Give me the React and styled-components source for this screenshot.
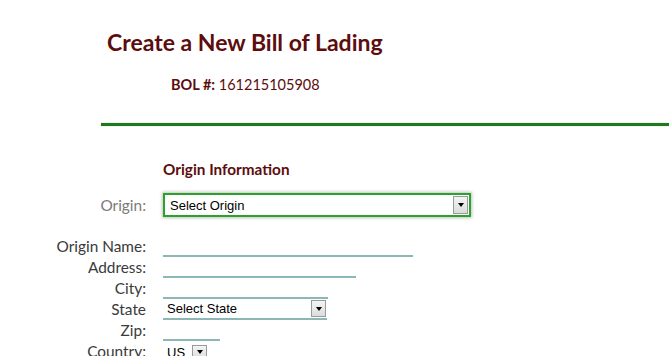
import React from "react";
import styled, { createGlobalStyle } from "styled-components";

const GlobalStyle = createGlobalStyle`
  html, body {
    margin: 0;
    padding: 0;
    background: #fff;
  }
  body {
    font-family: Lato, "Open Sans", sans-serif;
    color: #333;
  }
`;

const maroon = "#5c0d0d";
const rule = "#8db7b7";

const Page = styled.div`
  width: 669px;
  height: 356px;
  overflow: hidden;
`;

const Header = styled.div`
  padding: 28px 0 0 107px;
`;

const Title = styled.h1`
  margin: 0;
  font-size: 23px;
  font-weight: 700;
  color: ${maroon};
  line-height: 28px;
`;

const BolLine = styled.div`
  margin: 20px 0 0 64px;
  font-size: 14.5px;
  line-height: 18px;
  color: ${maroon};
  b {
    font-weight: 700;
  }
`;

const Divider = styled.div`
  margin: 29px 0 0 101px;
  height: 3px;
  background: #1c7a1c;
  box-shadow: 0 0 1px #5fa85f;
`;

const Form = styled.div`
  display: grid;
  grid-template-columns: 146px auto;
  column-gap: 17px;
  margin-top: 34px;
`;

const Section = styled.div`
  grid-column: 2;
  font-size: 15.3px;
  font-weight: 700;
  color: ${maroon};
  line-height: 18px;
  margin-bottom: 15px;
`;

const Label = styled.div`
  grid-column: 1;
  text-align: right;
  font-size: 15.4px;
  color: ${(p) => (p.$muted ? "#7a7a7a" : "#3a3a3a")};
  line-height: ${(p) => p.$h || 21}px;
  height: ${(p) => p.$h || 21}px;
  margin-bottom: ${(p) => p.$mb || 0}px;
  white-space: nowrap;
`;

const Field = styled.div`
  grid-column: 2;
  height: ${(p) => p.$h || 21}px;
  display: flex;
  align-items: flex-end;
  margin-bottom: ${(p) => p.$mb || 0}px;
`;

const Line = styled.input`
  width: ${(p) => p.$w}px;
  height: 19px;
  box-sizing: border-box;
  border: none;
  border-bottom: 2px solid ${rule};
  background: transparent;
  padding: 0;
  outline: none;
  font: inherit;
`;

const Select = styled.div`
  width: ${(p) => p.$w}px;
  height: ${(p) => p.$h}px;
  box-sizing: border-box;
  display: flex;
  align-items: center;
  justify-content: space-between;
  background: #fff;
  font-family: "Liberation Sans", Arial, sans-serif;
  font-size: 13px;
  color: #000;
  padding: ${(p) => p.$pad || "0 1px 0 5px"};
  border: ${(p) => p.$border || "none"};
  border-bottom: ${(p) => p.$bottom || p.$border || "none"};
  box-shadow: ${(p) => p.$shadow || "none"};
`;

const Arrow = styled.span`
  width: 15px;
  height: ${(p) => p.$h || 17}px;
  box-sizing: border-box;
  border: 1px solid #9a9a9a;
  background: linear-gradient(#f4f4f4, #dcdcdc);
  display: flex;
  align-items: center;
  justify-content: center;
  flex: none;
  &::after {
    content: "";
    border-left: 3.5px solid transparent;
    border-right: 3.5px solid transparent;
    border-top: 4px solid #000;
  }
`;

export default function App() {
  return (
    <Page>
      <GlobalStyle />
      <Header>
        <Title>Create a New Bill of Lading</Title>
        <BolLine>
          <b>BOL #:</b> 161215105908
        </BolLine>
      </Header>
      <Divider />
      <Form>
        <Section>Origin Information</Section>

        <Label $muted $h={24} $mb={19}>Origin:</Label>
        <Field $h={24} $mb={19}>
          <Select
            $w={308}
            $h={24}
            $border="2px solid #29a329"
            $shadow="0 0 3px 1px rgba(0,0,0,0.25)"
          >
            Select Origin
            <Arrow $h={18} />
          </Select>
        </Field>

        <Label>Origin Name:</Label>
        <Field>
          <Line $w={250} />
        </Field>

        <Label>Address:</Label>
        <Field>
          <Line $w={193} />
        </Field>

        <Label>City:</Label>
        <Field>
          <Line $w={165} />
        </Field>

        <Label>State</Label>
        <Field>
          <Select $w={164} $h={21} $bottom={`2px solid ${rule}`} $pad="0 1px 0 4px">
            Select State
            <Arrow />
          </Select>
        </Field>

        <Label>Zip:</Label>
        <Field>
          <Line $w={57} />
        </Field>

        <Label>Country:</Label>
        <Field>
          <Select $w={44} $h={20} $pad="0 0 0 4px">
            US
            <Arrow $h={15} />
          </Select>
        </Field>
      </Form>
    </Page>
  );
}
